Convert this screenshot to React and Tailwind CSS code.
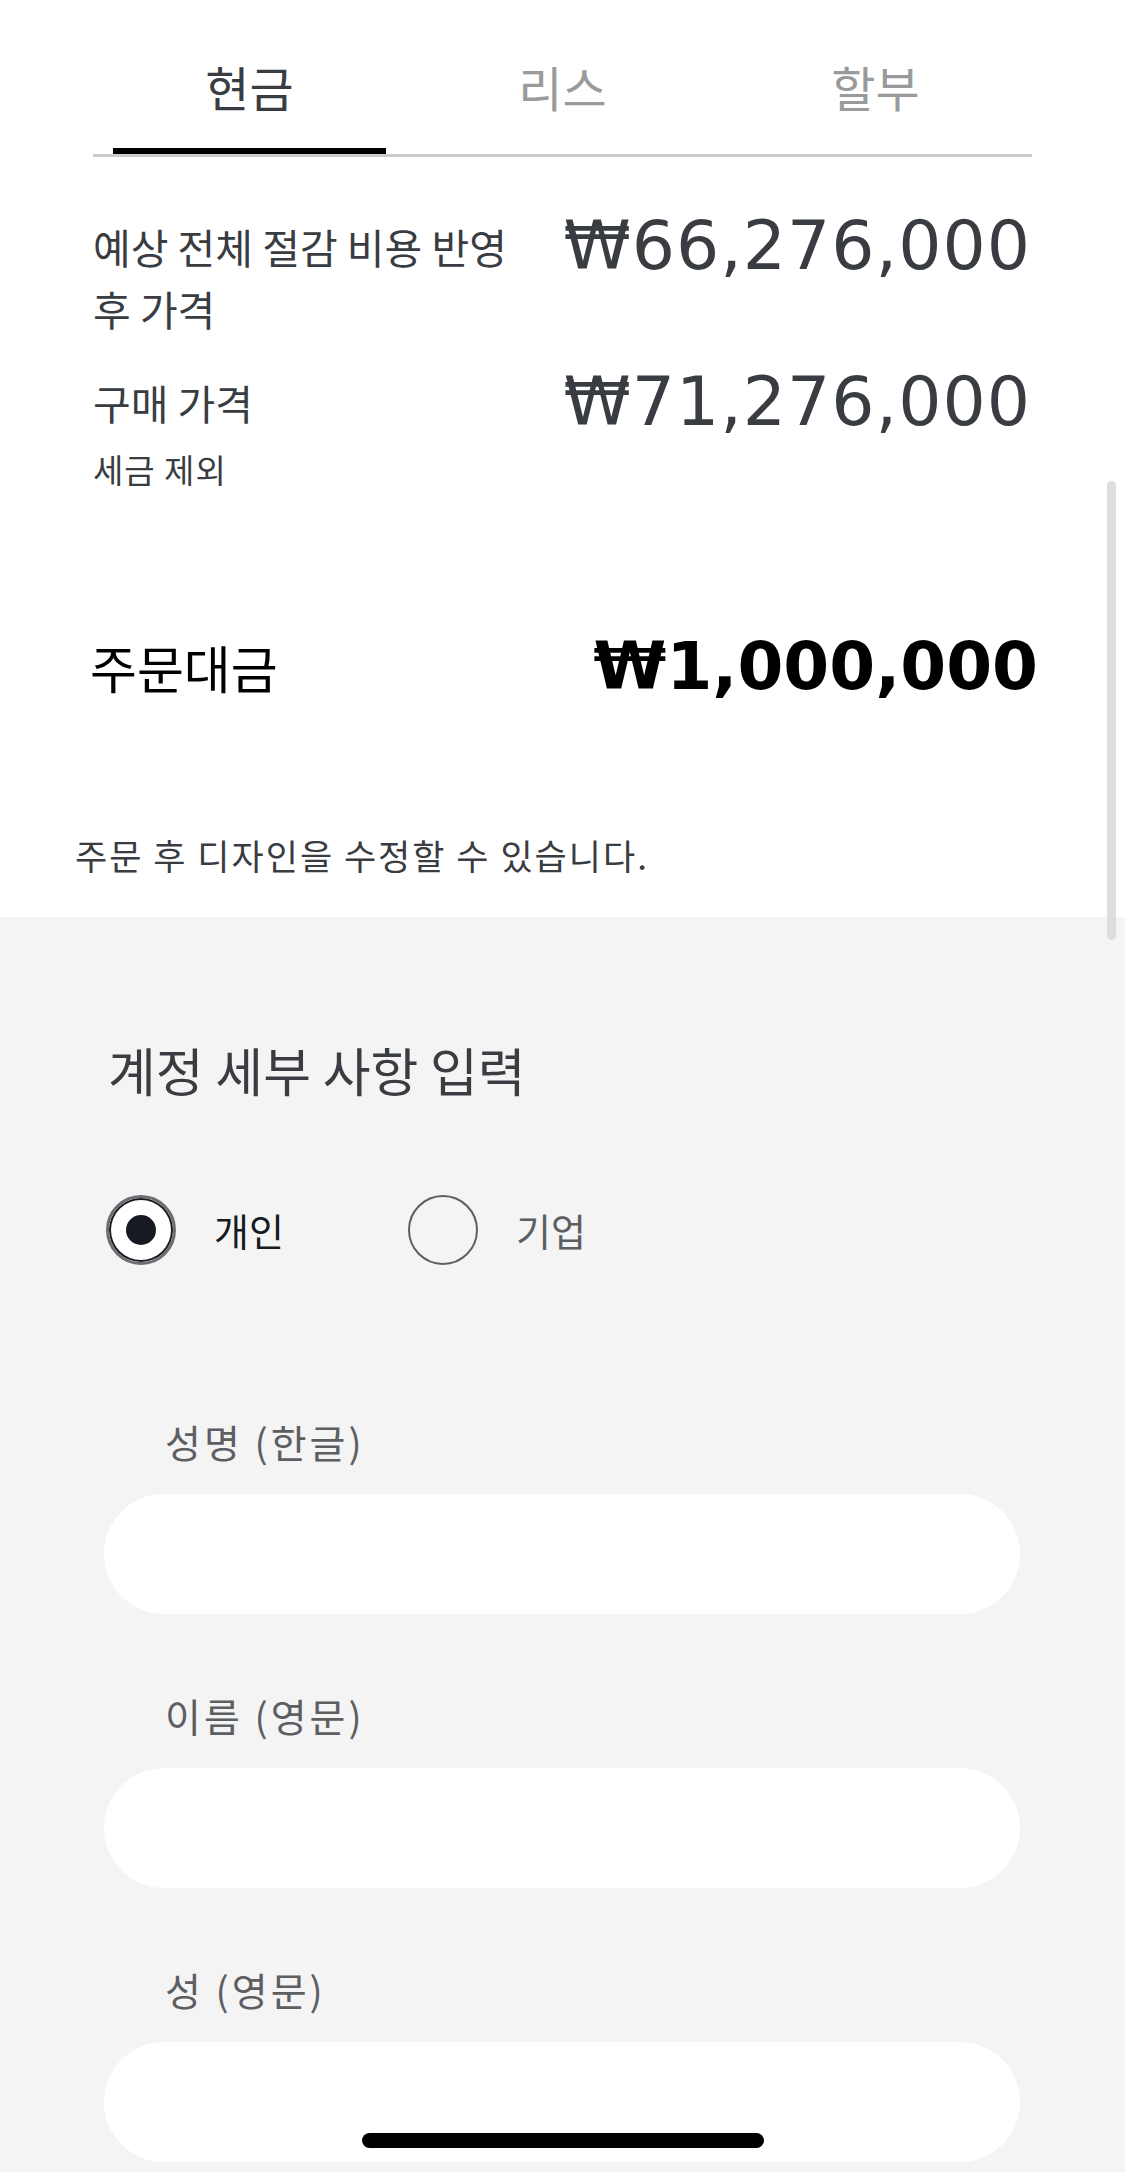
import { useState } from 'react'

const KR = "font-['Noto_Sans_CJK_KR','Noto_Sans',sans-serif]"
const NUM = "font-['DejaVu_Sans','Noto_Sans',sans-serif]"

const TABS = ['현금', '리스', '할부']

function Radio({ checked, label, onClick }) {
  return (
    <button onClick={onClick} className="flex items-center gap-[38px]">
      {checked ? (
        <span className="w-[70px] h-[70px] rounded-full bg-white border-[3px] border-[#6b6d71] shadow-[inset_0_0_0_2px_#171a20] flex items-center justify-center">
          <span className="w-[30px] h-[30px] rounded-full bg-[#171a20]" />
        </span>
      ) : (
        <span className="w-[70px] h-[70px] rounded-full border-[2px] border-[#5c5e62]" />
      )}
      <span className={`text-[38px] leading-[50px] ${checked ? 'text-[#171a20]' : 'text-[#5c5e62]'}`}>
        {label}
      </span>
    </button>
  )
}

function Field({ label }) {
  return (
    <div className="flex flex-col">
      <label className="pl-[165px] text-[39px] leading-[50px] tracking-[3px] text-[#5c5e62]">{label}</label>
      <input className="mt-[28px] ml-[104px] w-[916px] h-[120px] rounded-full bg-white outline-none px-[40px] text-[36px]" />
    </div>
  )
}

export default function App() {
  const [tab, setTab] = useState(0)
  const [type, setType] = useState('personal')

  return (
    <div className={`relative min-h-screen bg-[#f4f4f4] ${KR}`}>
      {/* summary */}
      <section className="bg-white pb-[42px]">
        <div className="mx-[93px] grid grid-cols-3 border-b-[3px] border-[#cccccc]">
          {TABS.map((t, i) => (
            <button key={t} onClick={() => setTab(i)} className="flex flex-col">
              <span
                className={`pt-[56px] pb-[32px] text-[48px] leading-[60px] ${
                  tab === i ? 'text-[#393c41]' : 'text-[#9a9a9a]'
                }`}
              >
                {t}
              </span>
              <span className={`mx-[20px] h-[6px] ${tab === i ? 'bg-black' : 'bg-transparent'}`} />
            </button>
          ))}
        </div>

        <div className="mt-[58px] pl-[93px] pr-[94px] flex items-start justify-between">
          <p className="w-[440px] text-[41px] leading-[62px] text-[#393c41]">
            예상 전체 절감 비용 반영 후 가격
          </p>
          <span className={`${NUM} text-[68px] leading-[62px] tracking-[1px] text-[#393c41]`}>₩66,276,000</span>
        </div>

        <div className="mt-[32px] pl-[93px] pr-[94px] flex items-start justify-between">
          <div>
            <p className="text-[41px] leading-[62px] text-[#393c41]">구매 가격</p>
            <p className="mt-[16px] text-[33px] leading-[40px] tracking-[1px] text-[#393c41]">세금 제외</p>
          </div>
          <span className={`${NUM} text-[68px] leading-[62px] tracking-[1px] text-[#393c41]`}>₩71,276,000</span>
        </div>

        <div className="mt-[143px] pl-[90px] pr-[87px] flex items-center justify-between">
          <span className="text-[51px] leading-[70px] text-black">주문대금</span>
          <span className={`${NUM} text-[66px] leading-[70px] font-bold text-black`}>₩1,000,000</span>
        </div>

        <p className="mt-[133px] pl-[75px] text-[35px] leading-[40px] tracking-[2px] text-[#393c41]">
          주문 후 디자인을 수정할 수 있습니다.
        </p>
      </section>

      {/* account details */}
      <section className="pt-[123px] pb-[20px]">
        <h2 className="pl-[108px] text-[52px] leading-[60px] text-[#393c41]">계정 세부 사항 입력</h2>

        <div className="mt-[95px] pl-[106px] flex items-center gap-[124px]">
          <Radio checked={type === 'personal'} label="개인" onClick={() => setType('personal')} />
          <Radio checked={type === 'business'} label="기업" onClick={() => setType('business')} />
        </div>

        <div className="mt-[151px] flex flex-col gap-[76px]">
          <Field label="성명 (한글)" />
          <Field label="이름 (영문)" />
          <Field label="성 (영문)" />
        </div>
      </section>

      {/* scroll bar */}
      <div className="absolute top-[481px] right-[9px] w-[9px] h-[459px] rounded-full bg-[#dadada]/90" />

      {/* home indicator */}
      <div className="absolute left-[362px] top-[2133px] w-[402px] h-[15px] rounded-full bg-black" />
    </div>
  )
}
